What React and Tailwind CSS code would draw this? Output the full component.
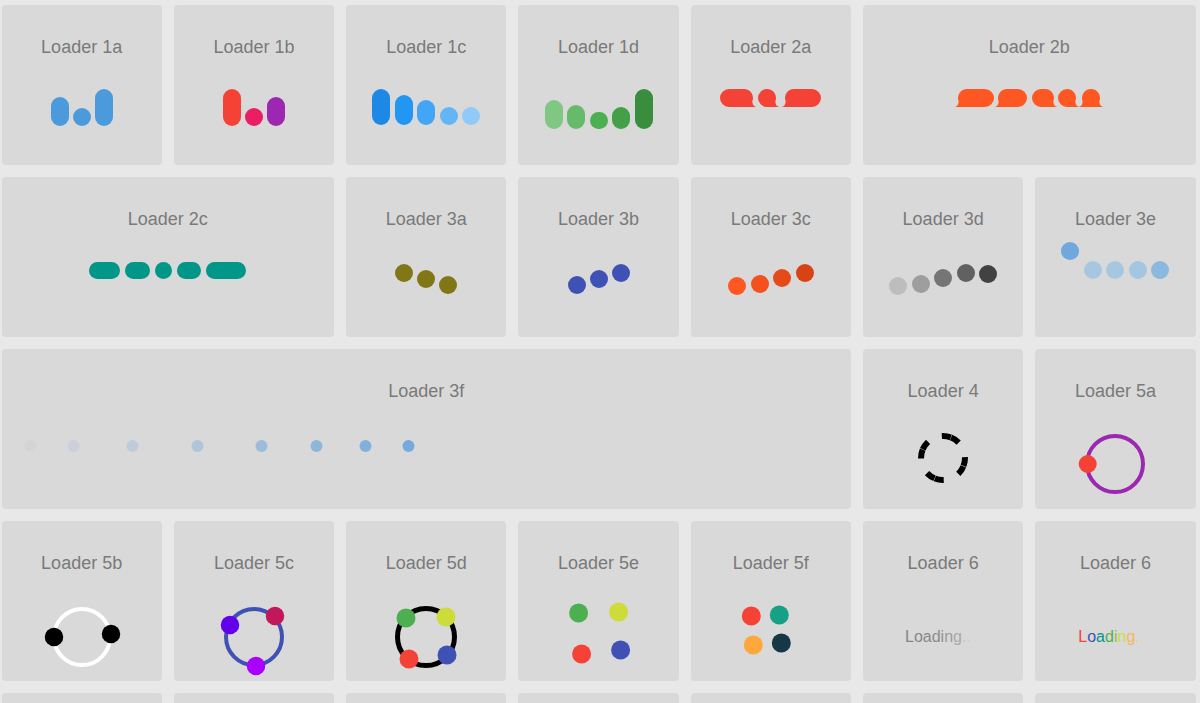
import React from 'react';

// speech-bubble style pill used by loaders 2a / 2b
const bubble = (cl, cr, tl, tr) => {
  let d = `M${cl},1 H${cr} `;
  d += tr ? `A9,9 0 0 1 ${cr + 8.29},13.5 Q${cr + 8.8},18.6 ${cr + 12.5},19 ` : `A9,9 0 0 1 ${cr},19 `;
  d += `H${tl ? cl - 12.5 : cl} `;
  d += tl ? `Q${cl - 8.8},18.6 ${cl - 8.29},13.5 A9,9 0 0 1 ${cl},1 Z` : `A9,9 0 0 1 ${cl},1 Z`;
  return d;
};

const Card = ({ title, className = '', children }) => (
  <div className={`flex h-[160px] flex-col items-center rounded-[4px] bg-[#d9d9d9] ${className}`}>
    {title && <div className="pt-[32px] text-[18px] leading-[20px] text-[#7a7a7a]">{title}</div>}
    {children}
  </div>
);

const Bars = ({ h, gap, items }) => (
  <div className={`flex items-end ${gap}`} style={{ height: h }}>
    {items.map(([height, color], i) => (
      <div key={i} className="w-[18px] rounded-full" style={{ height, background: color }} />
    ))}
  </div>
);

const Dots = ({ gap, items }) => (
  <div className={`flex items-start ${gap}`}>
    {items.map(([mt, color], i) => (
      <div key={i} className="h-[18px] w-[18px] rounded-full" style={{ marginTop: mt, background: color }} />
    ))}
  </div>
);

const Ring = ({ mt, stroke, width = 4, r = 28, dots }) => (
  <svg width="80" height="80" viewBox="0 0 80 80" className="overflow-visible" style={{ marginTop: mt }}>
    {stroke && <circle cx="40" cy="40" r={r} fill="none" stroke={stroke} strokeWidth={width} />}
    {dots.map(([x, y, c, rr = 9.25], i) => (
      <circle key={i} cx={x} cy={y} r={rr} fill={c} />
    ))}
  </svg>
);

const fade = [0.05, 0.12, 0.22, 0.35, 0.5, 0.62, 0.72, 0.82];
const fadeX = [28.5, 71.5, 130.5, 195.5, 259.5, 314.5, 363.5, 406.5];

const grayLoading = [
  ['L', '#858585'], ['o', '#868686'], ['a', '#888'], ['d', '#8c8c8c'], ['i', '#929292'],
  ['n', '#9c9c9c'], ['g', '#a9a9a9'], ['.', '#c2c2c2'], ['.', '#cdcdcd'],
];
const colorLoading = [
  ['L', '#f44336'], ['o', '#3f51b5'], ['a', '#009688'], ['d', '#4caf50'], ['i', '#8bc34a'],
  ['n', '#cddc39'], ['g', '#f5b85a'], ['.', '#f3c98c'], ['.', '#ead3b0'],
];

export default function App() {
  return (
    <div className="min-h-screen bg-[#e8e8e8] font-['Liberation_Sans',Arial,sans-serif]">
      <div className="grid grid-cols-[repeat(7,160.3px)] gap-[12px] pl-[1.5px] pt-[5px]">
        {/* row 1 */}
        <Card title="Loader 1a">
          <Bars h={69} gap="gap-[4px]" items={[[29, '#4b9bdc'], [18, '#4b9bdc'], [37, '#4b9bdc']]} />
        </Card>
        <Card title="Loader 1b">
          <Bars h={69} gap="gap-[4px]" items={[[37, '#f44336'], [18, '#e91e63'], [29, '#9c27b0']]} />
        </Card>
        <Card title="Loader 1c">
          <Bars h={68} gap="gap-[4.5px]" items={[[36, '#1e88e5'], [30, '#2196f3'], [25, '#42a5f5'], [18, '#64b5f6'], [18, '#90caf9']]} />
        </Card>
        <Card title="Loader 1d">
          <Bars h={72} gap="gap-[4.5px]" items={[[29, '#81c784'], [24, '#66bb6a'], [17, '#4caf50'], [22, '#43a047'], [40, '#388e3c']]} />
        </Card>
        <Card title="Loader 2a">
          <svg width="104" height="20" viewBox="0 0 104 20" className="mt-[31px]">
            <path d={bubble(10, 25, false, true)} fill="#f44336" />
            <path d={bubble(48, 48, false, true)} fill="#f44336" />
            <path d={bubble(75, 93, true, false)} fill="#f44336" />
          </svg>
        </Card>
        <Card title="Loader 2b" className="col-span-2">
          <svg width="150" height="20" viewBox="0 0 150 20" className="mt-[31px]">
            <path d={bubble(13, 31, true, false)} fill="#ff5722" />
            <path d={bubble(53, 64, true, false)} fill="#ff5722" />
            <path d={bubble(87, 91, false, true)} fill="#ff5722" />
            <path d={bubble(113, 113, false, true)} fill="#ff5722" />
            <path d={bubble(137, 137, true, true)} fill="#ff5722" />
          </svg>
        </Card>

        {/* row 2 */}
        <Card title="Loader 2c" className="col-span-2">
          <div className="mt-[33px] flex gap-[5px]">
            {[31, 25, 17, 24, 40].map((w, i) => (
              <div key={i} className="h-[17px] rounded-full bg-[#009688]" style={{ width: w }} />
            ))}
          </div>
        </Card>
        <Card title="Loader 3a">
          <Dots gap="gap-[4px]" items={[[35, '#827717'], [41, '#827717'], [47, '#827717']]} />
        </Card>
        <Card title="Loader 3b">
          <Dots gap="gap-[4px]" items={[[47, '#3f51b5'], [41, '#3f51b5'], [35, '#3f51b5']]} />
        </Card>
        <Card title="Loader 3c">
          <Dots gap="gap-[4.5px]" items={[[48, '#ff5722'], [46, '#f4511e'], [40, '#e64a19'], [35, '#d84315']]} />
        </Card>
        <Card title="Loader 3d">
          <Dots gap="gap-[4.5px]" items={[[48, '#bdbdbd'], [46, '#9e9e9e'], [40, '#757575'], [35, '#616161'], [36, '#424242']]} />
        </Card>
        <Card title="Loader 3e">
          <Dots gap="gap-[4.5px]" items={[[13, '#6fa8dc'], [32, '#a7c7e1'], [32, '#a7c7e1'], [32, '#a5c6e1'], [32, '#8ab8df']]} />
        </Card>

        {/* row 3 */}
        <Card title="Loader 3f" className="col-span-5">
          <svg width="420" height="14" viewBox="0 0 420 14" className="mt-[38px] self-start">
            {fadeX.map((x, i) => (
              <circle key={i} cx={x} cy="7" r="6" fill="#5fa0dc" fillOpacity={fade[i]} />
            ))}
          </svg>
        </Card>
        <Card title="Loader 4">
          <svg width="60" height="60" viewBox="0 0 60 60" className="mt-[27px]">
            <circle
              cx="30"
              cy="30"
              r="22"
              fill="none"
              stroke="#000"
              strokeWidth="6"
              strokeDasharray="9 0.4 9.03 16.13"
              transform="rotate(-93 30 30)"
            />
          </svg>
        </Card>
        <Card title="Loader 5a">
          <Ring mt={23} stroke="#9c27b0" dots={[[12.7, 40, '#f44336', 9]]} />
        </Card>

        {/* row 4 */}
        <Card title="Loader 5b">
          <Ring mt={23.5} stroke="#fff" dots={[[12, 40, '#000'], [69, 37, '#000']]} />
        </Card>
        <Card title="Loader 5c">
          <Ring mt={23.5} stroke="#3f51b5" dots={[[16, 28, '#6200ea'], [61, 19, '#c2185b'], [42, 69, '#aa00ff']]} />
        </Card>
        <Card title="Loader 5d">
          <Ring
            mt={23.5}
            stroke="#000"
            width={5}
            r={28.5}
            dots={[[20, 21, '#4caf50', 9.5], [60, 20, '#cddc39', 9.5], [23, 62, '#f44336', 9.5], [61, 58, '#3f51b5', 9.5]]}
          />
        </Card>
        <Card title="Loader 5e">
          <Ring mt={23.5} dots={[[19.6, 16, '#4caf50', 9.5], [59.6, 15, '#cddc39', 9.5], [22.6, 57, '#f44336', 9.5], [61.6, 53, '#3f51b5', 9.5]]} />
        </Card>
        <Card title="Loader 5f">
          <Ring mt={23.5} dots={[[20.3, 19, '#f44336', 9.5], [48.3, 18, '#16a085', 9.5], [22.3, 48, '#ffa73b', 9.5], [50.3, 46, '#143845', 9.5]]} />
        </Card>
        <Card title="Loader 6">
          <div className="mt-[55px] ml-[42px] self-start text-[16px] leading-[18px]">
            {grayLoading.map(([ch, c], i) => (
              <span key={i} style={{ color: c }}>{ch}</span>
            ))}
          </div>
        </Card>
        <Card title="Loader 6">
          <div className="mt-[55px] ml-[43px] self-start text-[16px] leading-[18px]">
            {colorLoading.map(([ch, c], i) => (
              <span key={i} style={{ color: c }}>{ch}</span>
            ))}
          </div>
        </Card>

        {/* row 5, only its top edge shows */}
        {[0, 1, 2, 3, 4, 5, 6].map((n) => (
          <Card key={n} />
        ))}
      </div>
    </div>
  );
}
